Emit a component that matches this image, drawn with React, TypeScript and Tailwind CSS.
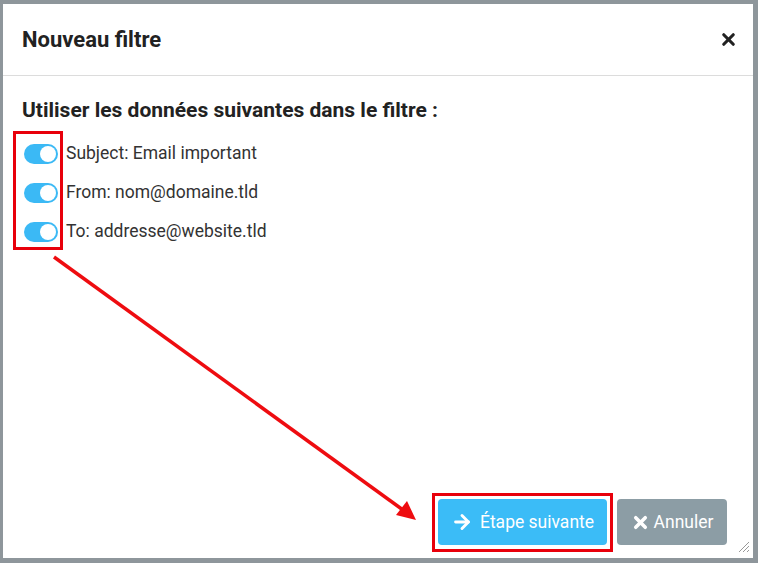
import { ArrowRight, X } from "lucide-react";

const rows = [
  "Subject: Email important",
  "From: nom@domaine.tld",
  "To: addresse@website.tld",
];

function Toggle() {
  return (
    <span className="relative inline-flex h-[20px] w-[34px] shrink-0 items-center rounded-full bg-[#3bb9f5]">
      <span className="absolute right-[2px] h-[16px] w-[16px] rounded-full bg-white" />
    </span>
  );
}

export default function App() {
  return (
    <div
      className="relative h-[563px] w-[758px] overflow-hidden bg-[#8e969b] pb-[5px] pl-[3px] pr-[5px] pt-[4px]"
      style={{ fontFamily: "Roboto, 'Liberation Sans', sans-serif" }}
    >
      <div className="flex h-full flex-col bg-white">
        <div className="flex h-[72px] items-center justify-between border-b border-[#dcdcdc] pl-[19px] pr-[15px]">
          <h1 className="text-[22px] font-bold text-[#222]">Nouveau filtre</h1>
          <X size={19} strokeWidth={4} className="text-[#222]" />
        </div>

        <div className="flex-1 pl-[19px] pt-[20px]">
          <p className="text-[21px] font-bold leading-[28px] text-[#222]">
            Utiliser les données suivantes dans le filtre :
          </p>
          <div className="mt-[10px] flex flex-col">
            {rows.map((r) => (
              <label key={r} className="flex h-[39px] items-center gap-[8px] pl-[2px] text-[17.5px] text-[#333]">
                <Toggle />
                <span>{r}</span>
              </label>
            ))}
          </div>
        </div>

        <div className="flex justify-end gap-[10px] pb-[13px] pr-[26px]">
          <button className="flex h-[46px] w-[169px] items-center justify-center gap-[7px] rounded-[4px] bg-[#3bbcf7] text-[17.5px] text-white">
            <ArrowRight size={22} strokeWidth={3.2} />
            Étape suivante
          </button>
          <button className="flex h-[46px] w-[110px] items-center justify-center gap-[4px] rounded-[4px] bg-[#8c9da5] text-[17.5px] text-white">
            <X size={19} strokeWidth={4.5} />
            Annuler
          </button>
        </div>
      </div>

      {/* resize grip */}
      <svg className="absolute bottom-[10px] right-[8px]" width="12" height="12" viewBox="0 0 12 12">
        <path d="M11 1L1 11M11 5L5 11M11 9L9 11" stroke="#999" strokeWidth="1" />
      </svg>

      {/* red annotations */}
      <div className="absolute left-[13px] top-[131px] h-[119px] w-[50px] border-[3px] border-[#e8000b]" />
      <div className="absolute left-[432px] top-[493px] h-[59px] w-[181px] border-[3px] border-[#e8000b]" />
      <svg className="absolute left-0 top-0" width="758" height="563">
        <line x1="54" y1="257" x2="403" y2="510" stroke="#ee0c10" strokeWidth="3.5" />
        <polygon points="416,520 396,515 407,501" fill="#ee0c10" />
      </svg>
    </div>
  );
}
